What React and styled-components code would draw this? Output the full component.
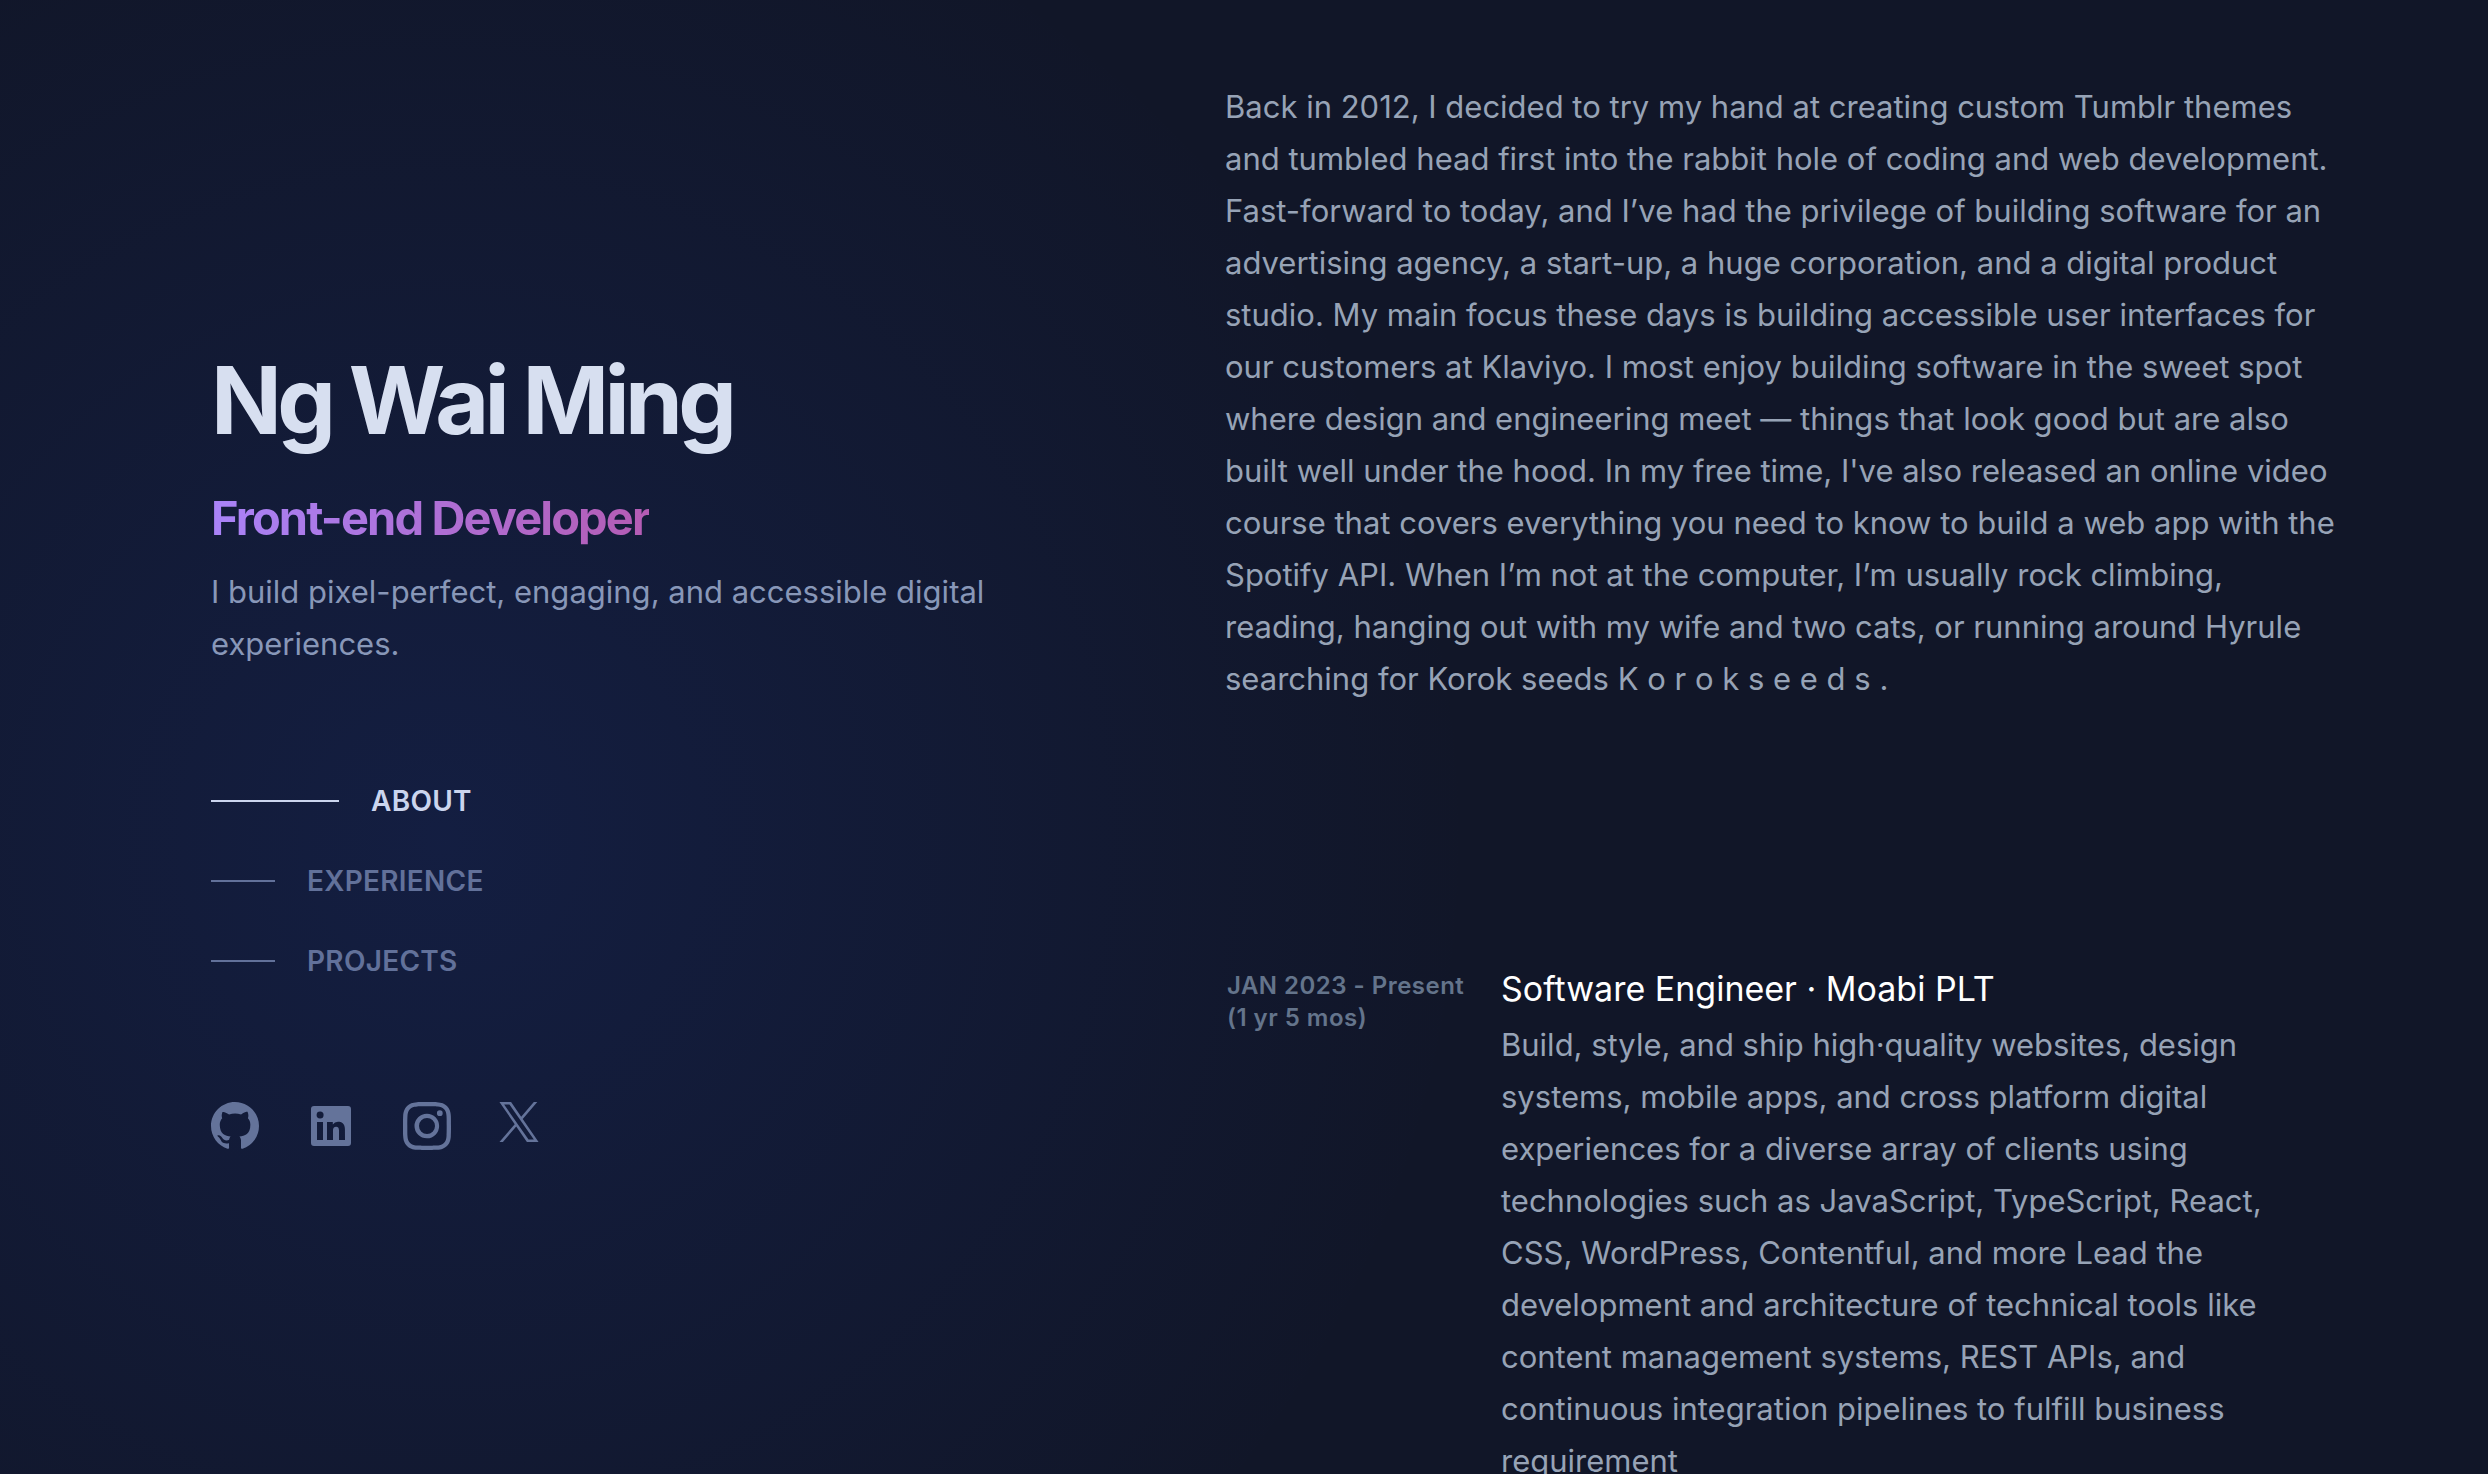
import React from "react";
import styled, { createGlobalStyle } from "styled-components";
import { BsGithub, BsInstagram } from "react-icons/bs";

const GlobalStyle = createGlobalStyle`
  *, *::before, *::after { box-sizing: border-box; }
  html, body { margin: 0; background: #111628; }
  body {
    font-family: Inter, "Liberation Sans", sans-serif;
    font-size: 31px;
    line-height: 52px;
    color: #97a3b6;
    -webkit-font-smoothing: antialiased;
  }
  h1, h2, h3, p, ul { margin: 0; padding: 0; }
  ul { list-style: none; }
  a { color: inherit; text-decoration: none; }
`;

const Page = styled.div`
  display: grid;
  grid-template-columns: minmax(0, 1014fr) minmax(0, 1120fr);
  align-items: start;
  height: 100vh;
  padding: 0 143px 0 211px;
  overflow: hidden;
  background: radial-gradient(1200px at 442px 839px, rgba(34, 76, 210, 0.15), transparent 86%);
`;

const Sidebar = styled.header`
  display: flex;
  flex-direction: column;
  padding: 352px 192px 0 0;
`;

const Name = styled.h1`
  font-size: 93px;
  line-height: 96px;
  font-weight: 700;
  letter-spacing: -0.05em;
  color: #d7dff0;
`;

const Role = styled.h2`
  align-self: flex-start;
  margin-top: 40px;
  font-size: 47px;
  line-height: 60px;
  font-weight: 700;
  letter-spacing: -0.04em;
  color: transparent;
  background: linear-gradient(to right, #a983f8, #b45cb4);
  background-clip: text;
  -webkit-background-clip: text;
`;

const Tagline = styled.p`
  margin-top: 18px;
  color: #8897b8;
`;

const NavList = styled.ul`
  margin-top: 91px;
`;

const NavLink = styled.a`
  display: flex;
  align-items: center;
  gap: 32px;
  height: 80px;
  font-size: 28px;
  line-height: 32px;
  font-weight: 600;
  text-transform: uppercase;
  letter-spacing: 0.01em;
  color: ${(p) => (p.$active ? "#cbd5ee" : "#62719a")};

  &::before {
    content: "";
    width: ${(p) => (p.$active ? 128 : 64)}px;
    height: 2px;
    background: currentColor;
  }
`;

const Socials = styled.ul`
  display: flex;
  gap: 48px;
  margin-top: 101px;
  color: #64739a;
`;

const SocialLink = styled.a`
  display: block;
  svg { display: block; width: ${(p) => p.$size}px; height: ${(p) => p.$size}px; }
`;

const Content = styled.main`
  padding-top: 81px;
`;

const Job = styled.article`
  display: grid;
  grid-template-columns: 276px minmax(0, 1fr);
  margin-top: 254px;
`;

const Period = styled.p`
  padding: 11px 0 0 2px;
  font-size: 24px;
  line-height: 32px;
  font-weight: 600;
  letter-spacing: 0.02em;
  color: #64748b;
`;

const Details = styled.div`
  padding-right: 80px;
`;

const JobTitle = styled.h3`
  font-size: 34px;
  line-height: 60px;
  font-weight: 400;
  color: #ffffff;
`;

const LinkedInIcon = () => (
  <svg viewBox="0 0 24 24" fill="currentColor" aria-hidden="true">
    <path d="M20.5 2h-17A1.5 1.5 0 002 3.5v17A1.5 1.5 0 003.5 22h17a1.5 1.5 0 001.5-1.5v-17A1.5 1.5 0 0020.5 2zM8 19H5v-9h3zM6.5 8.25A1.75 1.75 0 118.3 6.5a1.78 1.78 0 01-1.8 1.75zM19 19h-3v-4.74c0-1.42-.6-1.93-1.38-1.93A1.74 1.74 0 0013 14.19a.66.66 0 000 .14V19h-3v-9h2.9v1.3a3.11 3.11 0 012.7-1.4c1.55 0 3.36.86 3.36 3.66z" />
  </svg>
);

const XIcon = () => (
  <svg viewBox="0 0 1200 1227" fill="currentColor" aria-hidden="true">
    <path d="M714.163 519.284L1160.89 0H1055.03L667.137 450.887L357.328 0H0L468.492 681.821L0 1226.37H105.866L515.491 750.218L842.672 1226.37H1200L714.137 519.284H714.163ZM569.165 687.828L521.697 619.934L144.011 79.6944H306.615L611.412 515.685L658.88 583.579L1055.08 1150.3H892.476L569.165 687.854V687.828Z" />
  </svg>
);

const sections = ["About", "Experience", "Projects"];

const socials = [
  { name: "GitHub", Icon: BsGithub, size: 48 },
  { name: "LinkedIn", Icon: LinkedInIcon, size: 48 },
  { name: "Instagram", Icon: BsInstagram, size: 48 },
  { name: "X", Icon: XIcon, size: 40 },
];

export default function App() {
  return (
    <>
      <GlobalStyle />
      <Page>
        <Sidebar>
          <Name>Ng Wai Ming</Name>
          <Role>Front-end Developer</Role>
          <Tagline>I build pixel-perfect, engaging, and accessible digital experiences.</Tagline>
          <nav aria-label="Sections">
            <NavList>
              {sections.map((label, i) => (
                <li key={label}>
                  <NavLink href={`#${label.toLowerCase()}`} $active={i === 0}>
                    {label}
                  </NavLink>
                </li>
              ))}
            </NavList>
          </nav>
          <Socials>
            {socials.map(({ name, Icon, size }) => (
              <li key={name}>
                <SocialLink href={`#${name.toLowerCase()}`} aria-label={name} $size={size}>
                  <Icon />
                </SocialLink>
              </li>
            ))}
          </Socials>
        </Sidebar>
        <Content>
          <p id="about">
            Back in 2012, I decided to try my hand at creating custom Tumblr themes and tumbled head
            first into the rabbit hole of coding and web development. Fast-forward to today, and I’ve
            had the privilege of building software for an advertising agency, a start-up, a huge
            corporation, and a digital product studio. My main focus these days is building accessible
            user interfaces for our customers at Klaviyo. I most enjoy building software in the sweet
            spot where design and engineering meet — things that look good but are also built well
            under the hood. In my free time, I've also released an online video course that covers
            everything you need to know to build a web app with the Spotify API. When I’m not at the
            computer, I’m usually rock climbing, reading, hanging out with my wife and two cats, or
            running around Hyrule searching for Korok seeds K o r o k s e e d s .
          </p>
          <Job id="experience">
            <Period>
              JAN 2023 - Present
              <br />
              (1 yr 5 mos)
            </Period>
            <Details>
              <JobTitle>Software Engineer · Moabi PLT</JobTitle>
              <p>
                Build, style, and ship high·quality websites, design systems, mobile apps, and cross
                platform digital experiences for a diverse array of clients using technologies such as
                JavaScript, TypeScript, React, CSS, WordPress, Contentful, and more Lead the
                development and architecture of technical tools like content management systems, REST
                APIs, and continuous integration pipelines to fulfill business requirement
              </p>
            </Details>
          </Job>
        </Content>
      </Page>
    </>
  );
}
